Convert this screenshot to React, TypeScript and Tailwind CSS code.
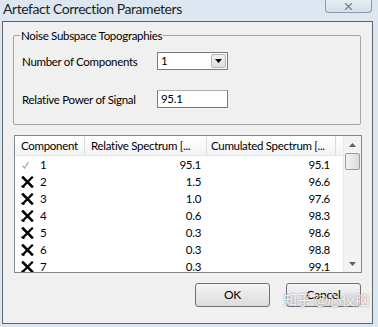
import React from "react";

type Row = { n: number; rel: string; cum: string; ok?: boolean };

const rows: Row[] = [
  { n: 1, rel: "95.1", cum: "95.1", ok: true },
  { n: 2, rel: "1.5", cum: "96.6" },
  { n: 3, rel: "1.0", cum: "97.6" },
  { n: 4, rel: "0.6", cum: "98.3" },
  { n: 5, rel: "0.3", cum: "98.6" },
  { n: 6, rel: "0.3", cum: "98.8" },
  { n: 7, rel: "0.3", cum: "99.1" },
];

const Cross = () => (
  <svg width={13} height={12} viewBox="0 0 13 12" className="shrink-0">
    <path d="M2 1.5 L11 10.5" stroke="#000" strokeWidth={2.6} strokeLinecap="square" />
    <path d="M11 1.5 L2 10.5" stroke="#000" strokeWidth={2.2} strokeLinecap="square" />
    <path d="M0.5 10 L3.5 11.5" stroke="#000" strokeWidth={1.4} />
  </svg>
);

const Check = () => (
  <svg width={13} height={12} viewBox="0 0 13 12" className="shrink-0">
    <path d="M1.5 6.5 L3.5 9 L7.5 3" stroke="#a0a0a0" strokeWidth={1.2} fill="none" />
  </svg>
);

const WinButton = ({ label }: { label: string }) => (
  <button className="w-[75px] h-[24px] border border-[#707070] rounded-[3px] bg-gradient-to-b from-[#f4f4f4] to-[#dcdcdc] text-[12px] tracking-[-0.2px] text-black">
    {label}
  </button>
);

export default function App() {
  return (
    <div className="relative w-[378px] h-[327px] overflow-hidden bg-[#dde7f1] font-['Lato',sans-serif] text-black whitespace-nowrap text-[11.5px] tracking-[-0.3px]">
      {/* title bar */}
      <div className="flex justify-between items-start h-[21px]">
        <span className="pl-[3px] pt-[1px] text-[14px] tracking-[-0.45px] leading-[16px] text-[#1e1e1e]">Artefact Correction Parameters</span>
        <div className="mr-[6px] w-[47px] h-[13px] border border-t-0 border-[#8d9aab] rounded-b-[4px] bg-gradient-to-b from-[#e7edf4] to-[#d5dfea] flex items-center justify-center">
          <svg width={9} height={7} viewBox="0 0 9 7">
            <path d="M1 0 L8 7 M8 0 L1 7" stroke="#7a8290" strokeWidth={1.3} fill="none" />
          </svg>
        </div>
      </div>

      {/* client area */}
      <div className="ml-[2px] w-[371px] h-[303px] border border-[#5f6468] bg-[#f0f0f0] flex flex-col">
        <fieldset className="ml-[10px] mt-[6px] w-[348px] h-[97px] border border-[#a5a5a5] rounded-[2px] px-[8px]">
          <legend className="ml-[-2px] px-[1px] leading-[15px]">Noise Subspace Topographies</legend>
          <div className="flex items-center h-[18px] mt-[9px]">
            <span className="w-[135px] pt-[2px]">Number of Components</span>
            <div className="w-[71px] h-[18px] border border-[#7a7a7a] bg-white flex items-center">
              <span className="flex-1 pl-[3px] leading-none">1</span>
              <div className="w-[15px] h-[14px] mr-[1px] border border-[#b4b4b4] rounded-[2px] bg-gradient-to-b from-[#f3f3f3] to-[#dedede] flex items-center justify-center">
                <svg width={7} height={4} viewBox="0 0 7 4">
                  <path d="M0 0 H7 L3.5 4 Z" fill="#000" />
                </svg>
              </div>
            </div>
          </div>
          <div className="flex items-center h-[18px] mt-[20px]">
            <span className="w-[135px] pt-[2px]">Relative Power of Signal</span>
            <div className="w-[71px] h-[18px] border border-[#7a7a7a] border-t-[#abadb3] bg-white flex items-center pl-[3px]">
              95.1
            </div>
          </div>
        </fieldset>

        {/* list view */}
        <div className="ml-[11px] mt-[10px] w-[348px] h-[138px] border border-[#828790] bg-white flex">
          <div className="flex-1 flex flex-col overflow-hidden">
            <div className="h-[20px] shrink-0 flex bg-gradient-to-b from-white to-[#f3f4f6] border-b border-[#e3e5e8]">
              <div className="w-[70px] pl-[6px] border-r border-[#dadcde] flex items-center overflow-hidden">Component</div>
              <div className="w-[122px] pl-[6px] border-r border-[#dadcde] flex items-center overflow-hidden">Relative Spectrum [...</div>
              <div className="w-[129px] pl-[4px] border-r border-[#dadcde] flex items-center overflow-hidden">Cumulated Spectrum [...</div>
              <div className="flex-1" />
            </div>
            {rows.map((r) => (
              <div key={r.n} className="h-[17px] shrink-0 flex items-center">
                <div className="w-[70px] pl-[6px] flex items-center gap-[6px]">
                  {r.ok ? <Check /> : <Cross />}
                  <span>{r.n}</span>
                </div>
                <div className="w-[122px] pr-[6px] text-right">{r.rel}</div>
                <div className="w-[129px] pr-[6px] text-right">{r.cum}</div>
              </div>
            ))}
          </div>
          {/* scrollbar */}
          <div className="w-[18px] bg-[#f3f3f3] border-l border-[#eaeaea] flex flex-col items-center">
            <div className="h-[17px] flex items-center justify-center">
              <svg width={7} height={4} viewBox="0 0 7 4">
                <path d="M0 4 H7 L3.5 0 Z" fill="#606060" />
              </svg>
            </div>
            <div className="w-[15px] h-[17px] border border-[#9b9b9b] rounded-[2px] bg-gradient-to-r from-[#f2f2f2] to-[#dcdcdc]" />
            <div className="flex-1" />
            <div className="h-[17px] flex items-center justify-center">
              <svg width={7} height={4} viewBox="0 0 7 4">
                <path d="M0 0 H7 L3.5 4 Z" fill="#606060" />
              </svg>
            </div>
          </div>
        </div>

        <div className="flex justify-end gap-[16px] mt-[10px] mr-[11px]">
          <WinButton label="OK" />
          <WinButton label="Cancel" />
        </div>
      </div>

      {/* watermark */}
      <span className="absolute left-[283px] top-[289px] text-[14px] tracking-normal text-white/90 font-['Noto_Sans_CJK_SC',sans-serif] [text-shadow:0_0_2px_rgba(0,0,0,0.45)]">
        知乎 @心仪脑
      </span>
    </div>
  );
}
